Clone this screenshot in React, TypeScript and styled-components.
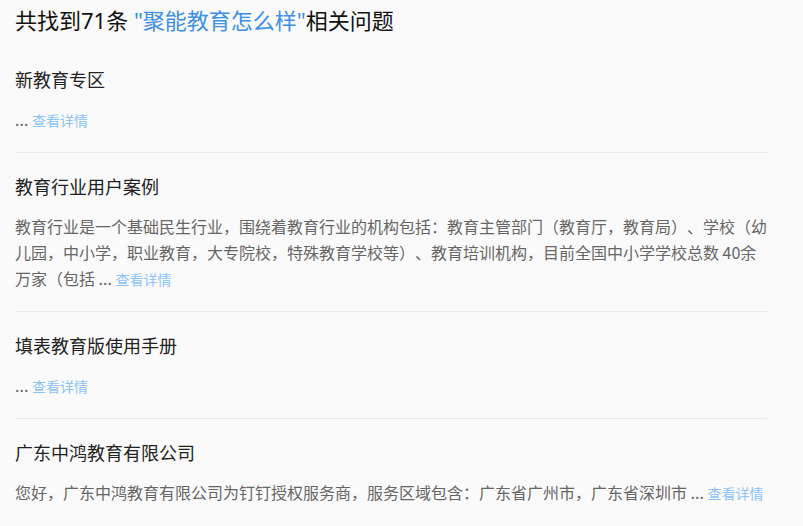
import styled, { createGlobalStyle } from 'styled-components';

const GlobalStyle = createGlobalStyle`
  html, body {
    margin: 0;
    padding: 0;
    background-color: #fafafa;
  }

  body {
    font-family: 'Noto Sans CJK SC', sans-serif;
    text-spacing-trim: space-all;
  }
`;

const Page = styled.main`
  width: 752px;
  padding: 0 15px;
`;

const Heading = styled.h1`
  margin: 0;
  padding: 7px 0 13px;
  font-family: 'Noto Sans', 'Noto Sans CJK SC', sans-serif;
  font-size: 22px;
  line-height: 26px;
  font-weight: 400;
  color: #111;
  white-space: nowrap;
`;

const Keyword = styled.span`
  color: #3d8fe8;
`;

const ResultList = styled.ul`
  list-style: none;
  margin: 0;
  padding: 0;
`;

const ResultItem = styled.li`
  padding: 20px 0 20px;
  border-bottom: 1px solid #e9e9e9;

  &:last-child {
    border-bottom: none;
  }
`;

const Title = styled.h2`
  margin: 0 0 14px;
  font-size: 18px;
  line-height: 26px;
  font-weight: 400;
  color: #222;
`;

const Summary = styled.p`
  margin: 0;
  font-size: 16px;
  line-height: 26px;
  color: #666;
  text-spacing-trim: space-all;
`;

const MoreLink = styled.a`
  font-size: 14px;
  line-height: 16px;
  color: #8cc3f8;
  text-decoration: none;
  cursor: pointer;
`;

type Result = {
  title: string;
  summary: string;
};

const results: Result[] = [
  { title: '新教育专区', summary: '' },
  {
    title: '教育行业用户案例',
    summary:
      '教育行业是一个基础民生行业，围绕着教育行业的机构包括：教育主管部门（教育厅，教育局）、学校（幼儿园，中小学，职业教育，大专院校，特殊教育学校等）、教育培训机构，目前全国中小学学校总数 40余万家（包括',
  },
  { title: '填表教育版使用手册', summary: '' },
  {
    title: '广东中鸿教育有限公司',
    summary: '您好，广东中鸿教育有限公司为钉钉授权服务商，服务区域包含：广东省广州市，广东省深圳市',
  },
];

const App: React.FC = () => (
  <>
    <GlobalStyle />
    <Page>
      <Heading>
        共找到71条 <Keyword>"聚能教育怎么样"</Keyword>相关问题
      </Heading>
      <ResultList>
        {results.map(item => (
          <ResultItem key={item.title}>
            <Title>{item.title}</Title>
            <Summary>
              {item.summary ? `${item.summary} ` : ''}... <MoreLink>查看详情</MoreLink>
            </Summary>
          </ResultItem>
        ))}
      </ResultList>
    </Page>
  </>
);

export default App;
